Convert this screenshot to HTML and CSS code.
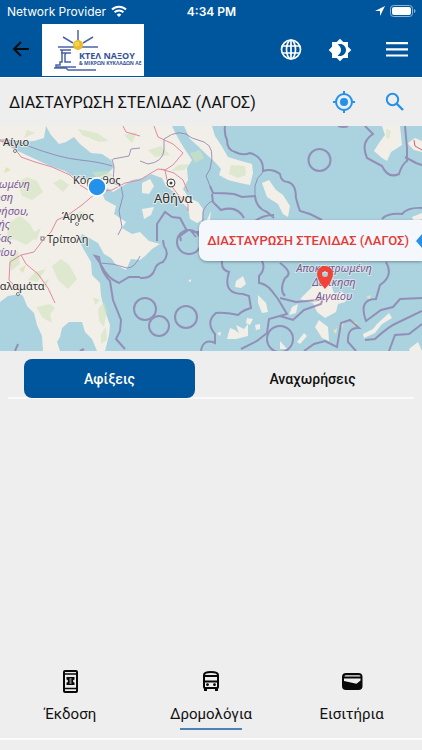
FILE: index.html
```html
<!DOCTYPE html>
<html lang="el">
<head>
<meta charset="utf-8">
<meta name="viewport" content="width=device-width, initial-scale=1">
<title>ΚΤΕΛ Νάξου</title>
<link rel="stylesheet" href="styles.css">
</head>
<body>
<div class="app">
  <div class="status">
    <div class="status-side">
      <span>Network Provider</span>
      <svg width="16" height="12" viewBox="0 0 16 12" fill="none" stroke="#fff" stroke-width="2"><path d="M1 4.5a10 10 0 0 1 14 0M3.6 7.2a6.300 6.300 0 0 1 8.800 0"/><path d="M8 12 5.700 9.700a3.300 3.300 0 0 1 4.600 0Z" fill="#fff" stroke="none"/></svg>
    </div>
    <strong class="clock">4:34 PM</strong>
    <div class="status-side status-right">
      <svg width="10" height="10" viewBox="0 0 10 10"><path d="M10 0 0 5h5v5Z" fill="#fff"/></svg>
      <svg width="26" height="12" viewBox="0 0 26 12"><rect x=".5" y=".5" width="22" height="11" rx="3" fill="none" stroke="#8db4d6"/><rect x="2" y="2" width="19" height="8" rx="2" fill="#fff"/><path d="M24 4v4q1.500-.5 1.500-2T24 4Z" fill="#8db4d6"/></svg>
    </div>
  </div>

  <header class="header">
    <button class="icon-btn back" aria-label="Πίσω"><svg width="18" height="18" viewBox="0 0 18 18" fill="none" stroke="#080c10" stroke-width="2"><path d="M17 8H2M9 1 2 8l7 7"/></svg></button>
    <a class="logo" href="#" aria-label="ΚΤΕΛ Νάξου">
      <svg width="102" height="52" viewBox="0 0 102 52">
        <rect width="102" height="52" fill="#fff"/>
        <g fill="none" stroke="#4a64a6" stroke-width="1.500">
          <path d="M36 6v10M21 13l10 6M51 13l-10 6M16 23h40"/>
          <path d="M18 26h11M19 29h9M20 26v12h-2v3h-4v2H34M29 29h-4q-2 0-2 2v7h6M12 44h12l2 2h28"/>
        </g>
        <circle cx="36" cy="21" r="5" fill="#e9bb24"/><circle cx="35" cy="20" r="2.500" fill="#f4d35a"/>
        <text x="37" y="35" class="logo-name">ΚΤΕΛ ΝΑΞΟΥ</text>
        <text x="37" y="41" class="logo-sub">&amp; ΜΙΚΡΩΝ ΚΥΚΛΑΔΩΝ ΑΕ</text>
      </svg>
    </a>
    <div class="header-actions">
      <button class="icon-btn" aria-label="Γλώσσα"><svg width="22" height="22" viewBox="0 0 22 22" fill="none" stroke="#fff" stroke-width="1.700"><circle cx="11" cy="10.500" r="9.500"/><ellipse cx="11" cy="10.500" rx="4.500" ry="9.500"/><path d="M11 1v19M2.500 7h17M2.500 14h17"/></svg></button>
      <button class="icon-btn" aria-label="Θέμα"><svg width="24" height="24" viewBox="0 0 24 24" fill="#fff"><path fill-rule="evenodd" d="M20 8.690V4h-4.690L12 .69 8.690 4H4v4.690L.69 12 4 15.310V20h4.690L12 23.310 15.310 20H20v-4.690L23.310 12 20 8.690ZM12 18c-.89 0-1.740-.2-2.500-.55C11.560 16.500 13 14.420 13 12s-1.440-4.500-3.500-5.450C10.260 6.200 11.110 6 12 6c3.310 0 6 2.690 6 6s-2.690 6-6 6Z"/></svg></button>
      <button class="icon-btn" aria-label="Μενού"><svg width="22" height="16" viewBox="0 0 22 16" fill="#fff"><path d="M0 0h22v2.200H0zM0 6.200h22v2.200H0zM0 12.400h22v2.200H0z"/></svg></button>
    </div>
  </header>

  <section class="stop">
    <h1>ΔΙΑΣΤΑΥΡΩΣΗ ΣΤΕΛΙΔΑΣ (ΛΑΓΟΣ)</h1>
    <button class="icon-btn" aria-label="Η θέση μου"><svg width="24" height="24" viewBox="0 0 24 24" fill="none" stroke="#2492eb" stroke-width="2"><circle cx="12" cy="12" r="8"/><circle cx="12" cy="12" r="4" fill="#2492eb" stroke="none"/><path d="M12 1v3M12 20v3M1 12h3M20 12h3"/></svg></button>
    <button class="icon-btn" aria-label="Αναζήτηση"><svg width="20" height="20" viewBox="0 0 20 20" fill="none" stroke="#2492eb" stroke-width="2"><circle cx="7.500" cy="7.500" r="5.700"/><path d="m11.500 11.500 6.500 6.500" stroke-width="2.400"/></svg></button>
  </section>

  <section class="map" aria-label="Χάρτης">
    <svg class="map-art" viewBox="0 0 422 225" preserveAspectRatio="xMidYMid slice">
      <rect width="422" height="225" fill="#aad3df"/>
      <g fill="#f2efe9">
        <path d="M0 0H172L178 12 184 22 192 34 187 42 188 54 183 63 189 72 198 76 203 83 202 94 197 97 190 93 188 82 180 75 174 66 166 60 162 52 151 48 143 52 132 54 123 60 113 66 107 62 102 67 105 74 116 80 114 88 126 96 122 102 132 108 140 106 149 115 160 118 152 123 145 130 140 134 131 133 126 144 116 139 111 132 104 128 98 117 91 113 82 108 79 114 84 124 91 136 92 149 100 157 101 170 104 182 110 199 109 209 105 225H97L92 213 85 206 82 196H69L62 202 60 211 57 216 60 225H43L42 210 37 199 34 187 27 180 23 170 20 168 8 170 0 176Z"/>
        <path d="M184 0 190 13 199 21 207 29 214 35 221 43 219 49 228 54 240 57 250 59 253 47 252 38 241 35 228 31 221 19 215 10 212 0Z"/>
        <path d="M262 57 269 54 276 64 283 69 290 80 288 91 283 88 278 78 267 71ZM382 0 385 9 379 17 374 25 382 32 387 35 391 26 402 19 400 0ZM408 17l7-5 7 3v11l-8-2-5-5ZM142 57l8-4 4 7-5 8-7-1ZM142 83l12-2-3 8-7 4ZM206 96l5-11-1 9Z"/>
        <path d="m236 155 7-5 3 8-5 4-6-1ZM258 169l8 8 2 9-6 1-4-10ZM227 213l3-11 5 2 4 3-3-8 8 4 4-5v12l-12 3ZM247 192l6 1-3 6-4-2ZM255 199l5-1v5l-4 1Z"/>
        <path d="M300 173l12-12 10-4 9 2 3 8 8-1 6 5-3 5-7 2-2 8-11 6-8-6-4-9-7-2ZM289 189l3-8 6-3-2 9ZM315 201l4-7 9 7 1 14-7-3ZM297 216l7-9 3 3-7 8ZM363 208l10-5 4-5 12-11 3 5-10 6-7 9-11 5ZM280 215l7 8h-7ZM409 223l9-7 4 9h-12Z"/>
        <path d="m0 138 17-5-6 5-11 6ZM0 119l9-2 6 4-10 10-5-1ZM188 155l3-2v3ZM217 207l4-1-1 4ZM412 91l10-4v6l-8 3Z"/>
      </g>
      <path fill="#aad3df" d="M0 15 6 19 22 27 35 33 50 40 65 45 76 52 90 54 107 48 114 41 111 34 102 28 91 27 80 18 74 11 66 16 59 18 51 9 46 0 44 12 34 15 20 16Z"/>
      <g class="woods">
        <path d="M15 58l12-7 10 4 6 11-11 8-10-4-3-9ZM10 96l10-6 10 8 7 13-11 8-12-6-9 3ZM52 140l9-7 8 6 8 14-9 10-10-9ZM42 158l7-6-3 10ZM53 57l8-4 8 6-6 7ZM78 3l19 4 12 8-10 1-17-7ZM148 24l13-4 9 9-15 2ZM190 27l10-3 4 8-9 5ZM178 39l12-1-6 6-13 1ZM231 39l14 1 1 9-8 3-9-4ZM98 183l6-7 3 8-3 17-5-6ZM93 171l7 3-5 5ZM50 178l5 4-5 6 2 9-9-5-7-11ZM35 146l11-3-9 13-9-2ZM9 133l9-8 2 13-9 7ZM31 108l10-6-5 13ZM80 85l9 4-6 6-9-4ZM92 46l16-1 5 5-15 3ZM27 4l8 3-11 5ZM124 9l13-3-5 11Z"/>
        <path d="M386 3l5 2-2 8-3-2ZM101 208l5-7 1 13-6 4Z"/>
      </g>
      <g fill="#dfe5b8"><path d="M333 205l4-3-1 6ZM340 199l4-3-2 6ZM350 195l7 2-3 3ZM366 171l5-2-1 4ZM19 143l7-4-3 8ZM6 41l5 3-7 3Z"/></g>
      <g class="borders">
        <path d="M0 14Q16 13 28 20 60 32 80 34T112 40M112 33l2 8-1 16 8 3 2 10-4 15 3 16-4 8M113 33l16-3 2-7 9-1M140 35l8 3q15-2 16-14V13q16-12 28-1l12 4q12 5 6 27l-4 7 4 10M255 70l0-10q1-8 8-14M212 75q-7 4-9 11v24"/>
        <path d="M100 137q14 0 27 5 8 0 13-12"/>
        <g stroke-width="2">
          <path d="M225 0q-1 8 2 14 0 10 8 12 8 4 15 1 14 4 13 18 9-3 17 3 1 8 8 8 8 2 8 16 2 8 4 13l10 3 12 6"/>
          <path d="M210 60l3 7q12 0 21 1l8 3 13-1q1 12 12 16l7 6M212 68l1 8 8 8q16-5 23 8M255 95q8-6 19-6M157 115v-17l8-12 7 5 8 1 7 13-7 5 1 5M202 106h-10l4 5"/>
          <path d="M365 0l8 8q-13 8-6 24l15 8q6 13 17 8 3-10 8-13V22L405 0M405 31l11 6 6 2M382 93q5-6 20-5 6-7 20-6M338 0q6 2 10 0"/>
          <path d="M163 114l1 6q6 8-1 16-7 2-8 7-3 10-15 9M222 135q-1 9 7 11-7 22 14 22l6 2 2 12q-8 2-13 7-14-3-22-2-11 9-1 21l0 9q-12-5-14 8M262 135q4 8-3 15v7q7 1 12 7l7 9 9 15-18 5-2 14-10 8-16 8M280 137q14 10 5 15-6 12 0 18M280 172l16 4 22-2 5-2-2 6-17 6-11 10-13-4M304 225l10-7 11-3 12 6 4-24 9-3 9 8q-12-1-11 14l8 9M386 136q8 14-6 23l-4 14q-18 0-10 22l15-11 12-3 7-8 22-1M365 214l10-1q14-13 24-17l23-11M389 225l6-16 14-1 13-10"/>
          <path d="M100 137l-1-6-4-1 5 7q3 11 10 18l3 19 8 20-1 11-4 8 9 10M101 139q7 14 18 18l10-6h11M15 225l3-7M80 225l4-2"/>
        </g>
        <circle cx="319.500" cy="34" r="11"/><circle cx="189" cy="116" r="12"/><circle cx="186" cy="191" r="11"/><circle cx="145" cy="183" r="11"/><circle cx="159" cy="200" r="10"/><circle cx="280" cy="213" r="13"/>
      </g>
      <g fill="none" stroke="#e08a9d" stroke-width="1">
        <path d="M0 15 11 17 21 31 35 36 52 41 70 49 80 59 88 64 97 66 112 64 125 57 140 54 151 47 158 43 165 44 173 39 183 27 173 18 158 11 154 0M96 67 82 79 68 89 57 94 51 106 43 114 34 126 21 129 10 136 9 154 21 167M21 129l5 9 12 10 10 14 7 15"/>
        <path d="m161 43 13 4 9 7 5 12M123 0l3 6 14 4M165 44l2 10 12 16 9 8v7"/><path d="m414 14 1 6 7 4" stroke="#d56073"/>
      </g>
      <circle cx="171" cy="57" r="4" fill="#fff" stroke="#444"/><circle cx="171" cy="57" r="1.500" fill="#444"/>
      <g fill="#fff" stroke="#777"><circle cx="15" cy="25" r="1.500"/><circle cx="77" cy="98" r="1.500"/><rect x="41" y="111" width="3" height="3"/><circle cx="18" cy="168" r="1.500"/></g>
      <g class="place">
        <text x="3" y="20">Αίγιο</text><text x="73" y="58">Κόρινθος</text><text x="62" y="94">Άργος</text><text x="47" y="117">Τρίπολη</text><text x="-7" y="164">Καλαμάτα</text>
        <text x="154" y="77" class="capital">Αθήνα</text>
      </g>
      <g class="region">
        <text x="30" y="62" text-anchor="end">Αποκεντρωμένη</text><text x="13" y="75" text-anchor="end">Διοίκηση</text><text x="29" y="89" text-anchor="end">Πελοποννήσου,</text><text x="10" y="102" text-anchor="end">Δυτικής</text><text x="12" y="116" text-anchor="end">Ελλάδας</text><text x="16" y="130" text-anchor="end">Ιονίου</text>
      </g>
      <g class="region aegean"><text x="334" y="146">Αποκεντρωμένη</text><text x="334" y="160">Διοίκηση</text><text x="334" y="174">Αιγαίου</text></g>
      <circle cx="97" cy="61" r="9" fill="#2492eb" stroke="#fff" stroke-width="1.500"/>
      <path fill-rule="evenodd" d="M325 163q-8-9-8-15a8 8 0 0 1 16 0q0 6-8 15Zm0-18a3 3 0 1 0 0 6 3 3 0 0 0 0-6Z" fill="#f44336"/>
    </svg>
    <div class="callout"><span>ΔΙΑΣΤΑΥΡΩΣΗ ΣΤΕΛΙΔΑΣ (ΛΑΓΟΣ)</span><svg width="7" height="16" viewBox="0 0 7 16"><path d="M7 1 1 8l6 7Z" fill="#2492eb"/></svg></div>
  </section>

  <div class="tabs">
    <button class="tab active">Αφίξεις</button>
    <button class="tab">Αναχωρήσεις</button>
  </div>
  <main class="results"></main>

  <nav class="bottom">
    <a href="#"><svg width="24" height="24" viewBox="0 0 24 24"><rect x="6" y="2" width="13" height="21" rx="1" fill="none" stroke="#080808" stroke-width="2"/><path d="M6 5h13M6 19.500h13" stroke="#080808" stroke-width="1.500"/><path fill="#080808" d="M8.500 8h8v2.500a1.500 1.500 0 0 0 0 3V16h-8v-2.500a1.500 1.500 0 0 0 0-3Z"/><path d="M11.500 10h2M11.500 12h2M11.500 14h2" stroke="#eee"/></svg><span>Έκδοση</span></a>
    <a href="#" class="current"><svg width="24" height="24" viewBox="0 0 24 24" fill="none" stroke="#080808" stroke-width="2"><path d="M5 18V6q0-3 7-3t7 3v12q0 1-1 1H6q-1 0-1-1ZM5 7h14M5 12.500h14"/><path d="M6.500 19v3M17.500 19v3" stroke-width="3"/><g fill="#080808" stroke="none"><circle cx="8.500" cy="15.700" r="1.400"/><circle cx="15.500" cy="15.700" r="1.400"/></g></svg><span>Δρομολόγια</span></a>
    <a href="#"><svg width="24" height="24" viewBox="0 0 24 24"><rect x="2" y="4" width="20.500" height="17" rx="4" fill="#080808"/><path d="M6 6.200h13q1.500 0 1.500 1.300H4.500Q4.500 6.200 6 6.200ZM4 9.500h16.500v2l-4 3.200L4 12Z" fill="#eee"/></svg><span>Εισιτήρια</span></a>
  </nav>
</div>
</body>
</html>
```
FILE: styles.css
```css
* { box-sizing: border-box; }
body { margin: 0; background: #eee; color: #111; font-family: Roboto, "Noto Sans", sans-serif; }
.app { min-height: 100vh; display: flex; flex-direction: column; overflow: hidden; }
svg { display: block; flex: none; }
button { font: inherit; border: 0; background: none; padding: 0; cursor: pointer; }
a { color: inherit; text-decoration: none; }

.status { display: grid; grid-template-columns: 1fr auto 1fr; align-items: center; height: 22px; padding: 0 6px 0 7px; background: #00569c; color: #fff; font: 12px Inter, sans-serif; }
.status-side { display: flex; align-items: center; gap: 5px; }
.status-right { justify-content: flex-end; }
.clock { font-weight: 600; }

.header { display: flex; align-items: center; height: 56px; padding: 0 14px 0 12px; background: #00569c; border-bottom: 1px solid #fff; }
.icon-btn { display: flex; align-items: center; justify-content: center; }
.back { margin-right: 12px; }
.header-actions { display: flex; align-items: center; margin-left: auto; }
.header-actions .icon-btn { margin-left: 26px; }
.header-actions .icon-btn:last-child { margin-left: 34px; }
.logo-name { font: 700 9px "Open Sans", sans-serif; fill: #34539a; }
.logo-sub { font: 700 5px "Open Sans", sans-serif; fill: #34539a; }

.stop { display: flex; align-items: center; height: 48px; padding: 0 17px 0 9px; gap: 29px; }
.stop h1 { flex: 1; margin: 0; font-size: 16px; font-weight: 400; white-space: nowrap; }

.map { position: relative; height: 225px; overflow: hidden; }
.map-art { width: 100%; height: 100%; }
.woods { fill: #d2e5bd; opacity: .6; }
.borders { fill: none; stroke: #8d7fae; stroke-width: 1; opacity: .8; }
.borders circle { stroke-width: 2; }
.place { font: 11px "Noto Sans", sans-serif; fill: #333; stroke: #f5f3ee; stroke-width: 2px; stroke-opacity: .7; paint-order: stroke; }
.capital { font-size: 13px; }
.region { font: italic 11px "Noto Sans", sans-serif; fill: #7d5a94; stroke: #f5f3ee; stroke-width: 2px; stroke-opacity: .5; paint-order: stroke; }
.aegean { text-anchor: middle; }
.callout { position: absolute; top: 94px; right: 0; display: flex; align-items: center; gap: 6px; height: 41px; padding-left: 8px; border-radius: 8px 0 0 8px; background: #f4f7fb; box-shadow: 0 1px 3px #0005; color: #e53935; font-size: 13px; font-weight: 500; white-space: nowrap; }

.tabs { display: flex; margin: 8px 8px 0; border-bottom: 2px solid #fafafa; }
.tab { flex: 1; height: 39px; margin: 0 16px -1px; border-radius: 8px; font-size: 14px; font-weight: 500; color: #111; }
.tab.active { background: #00569c; color: #fff; }
.results { flex: 1; }

.bottom { display: flex; height: 71px; margin-bottom: 10px; border-bottom: 2px solid #fafafa; }
.bottom a { flex: 1; display: flex; flex-direction: column; align-items: center; font-size: 15px; line-height: 20px; }
.bottom span { margin-top: 11px; }
.current::after { content: ""; width: 62px; height: 2px; margin-top: 4px; background: #4b83b8; }
```
